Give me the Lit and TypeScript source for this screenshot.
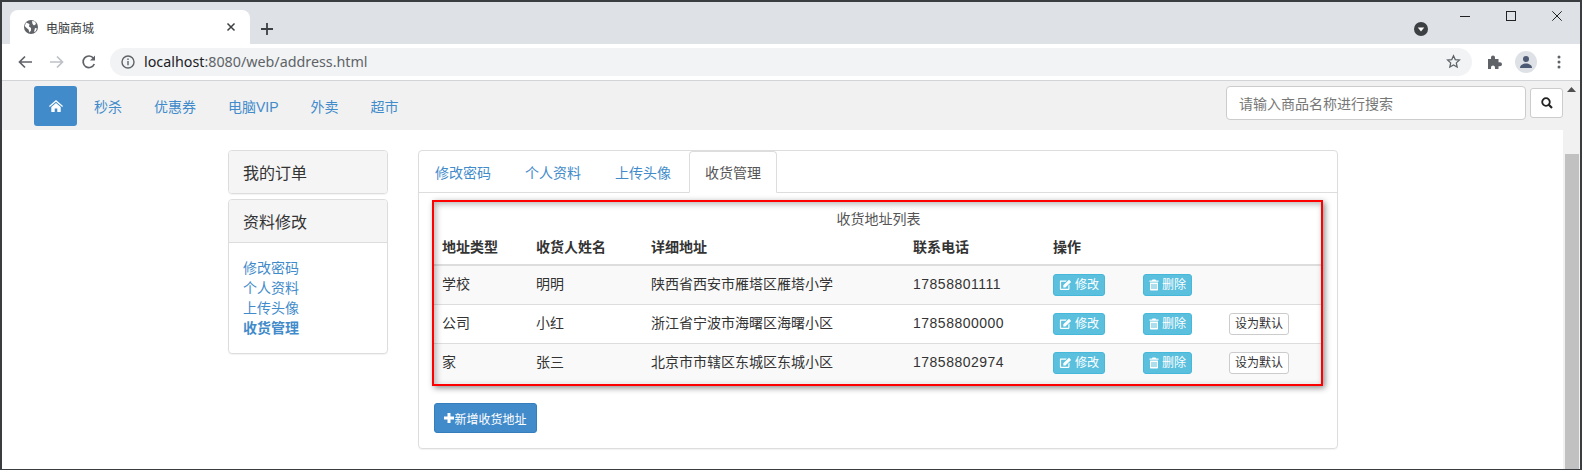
import { LitElement, html, css, svg } from "lit";
import { customElement } from "lit/decorators.js";

const rows = [
  { type: "学校", name: "明明", addr: "陕西省西安市雁塔区雁塔小学", tel: "17858801111", def: false },
  { type: "公司", name: "小红", addr: "浙江省宁波市海曙区海曙小区", tel: "17858800000", def: true },
  { type: "家", name: "张三", addr: "北京市市辖区东城区东城小区", tel: "17858802974", def: true },
];

const editIcon = svg`<svg class="gi" width="13" height="12" viewBox="0 0 13 12"><path d="M1.800 1.500h6L6.700 2.700H2.400c-.2 0-.3.100-.3.300v6.500c0 .2.100.3.300.3h6.600c.2 0 .3-.1.300-.3V6.700l1.200-1.200v4.200c0 .8-.6 1.400-1.400 1.400H2.300c-.8 0-1.400-.6-1.400-1.400V2.800c0-.8.200-1.300.9-1.300z" fill="currentColor"/><path d="M4.300 6.200 10 .8l2.100 2.100-5.700 5.500H4.300z" fill="currentColor"/></svg>`;
const trashIcon = svg`<svg class="gi" width="10" height="12" viewBox="0 0 10 12"><path d="M3.500 .4h3l.6 1h2.400v1.400H.5V1.400h2.400zM1 3.500h8v7c0 .7-.4 1.100-1 1.100H2c-.6 0-1-.4-1-1.100zM2.500 5v5h1V5zm2 0v5h1V5zm2 0v5h1V5z" fill="currentColor" fill-rule="evenodd"/></svg>`;

@customElement("app-root")
export class AppRoot extends LitElement {
  static styles = css`
    :host { display: block; width: 1582px; height: 470px; overflow: hidden; font-family: "Liberation Sans", "Noto Sans CJK SC", sans-serif; font-size: 14px; color: #333; }
    * { box-sizing: border-box; }
    .win { width: 1582px; height: 470px; border: solid #3a3d40; border-width: 2px 2px 1px 2px; display: flex; flex-direction: column; background: #fff; overflow: hidden; }
    .strip { height: 42px; background: #dee1e6; display: flex; align-items: flex-end; padding-left: 8px; flex: none; }
    .tab { width: 240px; height: 34px; background: #fff; border-radius: 8px 8px 0 0; display: flex; align-items: center; padding: 0 14px 0 13px; font-size: 12px; color: #3c4043; gap: 7px; font-family: "Noto Sans CJK SC", sans-serif; }
    .tab span { flex: 1; }
    .plus { margin: 0 0 9px 11px; display: flex; }
    .spacer { flex: 1; }
    .drop { margin: 0 14px 8px 0; display: flex; }
    .winbtns { align-self: flex-start; display: flex; margin-top: 6px; }
    .winbtn { width: 46px; height: 16px; display: flex; align-items: center; justify-content: center; }
    .toolbar { height: 37px; flex: none; background: #fff; border-bottom: 1px solid #d3d4d6; display: flex; align-items: center; padding: 0 0 1px 15px; }
    .navicon { display: flex; width: 16px; margin-right: 16px; }
    .navicon.last { margin-right: 13px; }
    .omni { flex: none; width: 1362px; height: 28px; background: #f1f3f4; border-radius: 14px; display: flex; align-items: center; padding: 0 11px 0 11px; font-family: "Noto Sans", sans-serif; font-size: 14.3px; color: #5f6368; gap: 9px; }
    .omni b { font-weight: normal; color: #202124; }
    .omni .u { flex: 1; }
    .exts { display: flex; align-items: center; margin-left: 15px; }
    .avatar { width: 22px; height: 22px; border-radius: 50%; background: #dee1e6; display: flex; align-items: center; justify-content: center; margin: 0 20px 0 12px; }
    .page { flex: 1; display: flex; min-height: 0; }
    .content { flex: 1; min-width: 0; }
    .scroll { width: 17px; flex: none; background: #f1f1f1; display: flex; flex-direction: column; align-items: center; padding-top: 6px; }
    .thumb { width: 14px; flex: 1; margin-top: 62px; background: #c1c1c1; }
    .nav { height: 49px; background: #f1f1f1; display: flex; align-items: flex-start; padding: 5px 0 0 32px; }
    .home { width: 43px; height: 40px; background: #428bca; border-radius: 3px; display: flex; align-items: center; justify-content: center; margin-right: 17px; }
    .navlinks { display: flex; gap: 32px; height: 40px; align-items: center; color: #428bca; font-size: 14px; }
    .search { margin-left: auto; display: flex; gap: 4px; align-items: flex-start; }
    .input { width: 300px; height: 34px; border: 1px solid #ccc; border-radius: 4px; background: #fff; padding: 0 12px; display: flex; align-items: center; color: #777; font-size: 14px; }
    .sbtn { width: 33px; height: 30px; margin-top: 2px; border: 1px solid #ccc; border-radius: 3px; background: #fff; display: flex; align-items: center; justify-content: center; }
    .main { display: flex; align-items: flex-start; padding: 20px 0 0 226px; gap: 30px; }
    .left { width: 160px; display: flex; flex-direction: column; gap: 5px; }
    .panel { border: 1px solid #ddd; border-radius: 4px; box-shadow: 0 1px 1px rgba(0,0,0,.05); overflow: hidden; }
    .ph { height: 42px; background: #f5f5f5; font-size: 16px; display: flex; align-items: center; padding-left: 14px; color: #333; }
    .panel .ph.b { height: 43px; border-bottom: 1px solid #ddd; }
    .pb { padding: 15px 14px 0; height: 110px; display: flex; flex-direction: column; color: #428bca; line-height: 20px; }
    .pb strong { font-weight: bold; }
    .right { width: 920px; height: 299px; border: 1px solid #ddd; border-radius: 4px; box-shadow: 0 1px 1px rgba(0,0,0,.05); display: flex; flex-direction: column; }
    .tabs { height: 42px; flex: none; border-bottom: 1px solid #ddd; display: flex; align-items: flex-end; color: #428bca; }
    .t { height: 41px; display: flex; align-items: center; padding-left: 16px; width: 90px; white-space: nowrap; }
    .t.active { width: 88px; height: 42px; margin-bottom: -1px; padding-left: 15px; background: #fff; border: 1px solid #ddd; border-bottom-color: #fff; border-radius: 4px 4px 0 0; color: #555; }
    .body { padding: 7px 15px 0 13px; }
    .box { position: relative; width: 891px; height: 186px; border: 2px solid #f00; box-shadow: 2px 2px 6px rgba(0,0,0,.45); background: #fff; }
    .box::after { content: ""; position: absolute; inset: 0; box-shadow: inset 2px 2px 6px rgba(0,0,0,.3); pointer-events: none; }
    table { border-collapse: collapse; width: 887px; table-layout: fixed; }
    .c1 { width: 94px; }
    .c2 { width: 115px; }
    .c3 { width: 262px; }
    .c4 { width: 140px; }
    .c5 { width: 90px; }
    .c6 { width: 86px; }
    caption { padding: 7px 0 0 2px; line-height: 20px; height: 27px; color: #555; text-align: center; }
    th { text-align: left; font-weight: bold; height: 36px; padding: 0 0 2px 8px; border-bottom: 2px solid #ddd; color: #333; vertical-align: middle; }
    td { padding: 0 0 2px 8px; height: 39px; border-top: 1px solid #ddd; vertical-align: middle; line-height: 20px; color: #333; }
    td.act { padding-bottom: 0; }
    tbody tr:nth-child(odd) td { background: #f9f9f9; }
    tbody tr:first-child td { border-top: 0; }
    tbody tr:last-child td { height: 40px; }
    .tel { letter-spacing: .5px; }
    .btn { display: inline-flex; align-items: center; justify-content: center; height: 22px; border-radius: 3px; font-size: 12px; gap: 3px; vertical-align: middle; }
    .info { background: #5bc0de; color: #fff; border: 1px solid #46b8da; }
    .w1 { width: 52px; }
    .w2 { width: 49px; }
    .def { width: 60px; background: #fff; border: 1px solid #ccc; color: #333; }
    .add { margin: 17px 0 0 2px; width: 103px; height: 30px; background: #428bca; border: 1px solid #357ebd; border-radius: 3px; color: #fff; display: flex; align-items: center; justify-content: center; font-size: 12px; gap: 0; white-space: nowrap; }
    .gi { flex: none; }
  `;

  render() {
    return html`
      <div class="win">
        <div class="strip">
          <div class="tab">
            <svg width="16" height="16" viewBox="0 0 16 16"><circle cx="8" cy="8" r="7" fill="#5f6368"/><path d="M3 3.500 6.500 5 6 7.500l2 1.500v2.500l-1.500 2-1-3L3 8.500 1.800 7zM9 2l3 .5L13 5l-2 1.500L9.500 5zM12 9l2 .5-1.500 3-1.500.5z" fill="#fff"/></svg>
            <span>电脑商城</span>
            <svg width="10" height="10" viewBox="0 0 10 10"><path d="M1.500 1.500l7 7M8.500 1.500l-7 7" stroke="#3c4043" stroke-width="1.500"/></svg>
          </div>
          <div class="plus"><svg width="12" height="12" viewBox="0 0 12 12"><path d="M6 0v12M0 6h12" stroke="#3c4043" stroke-width="1.800"/></svg></div>
          <div class="spacer"></div>
          <div class="drop"><svg width="14" height="14" viewBox="0 0 14 14"><circle cx="7" cy="7" r="7" fill="#3c4043"/><path d="M3.800 5.500h6.400L7 9.500z" fill="#fff"/></svg></div>
          <div class="winbtns">
            <div class="winbtn"><svg width="10" height="10" viewBox="0 0 10 10"><path d="M0 5.500h10" stroke="#222" stroke-width="1"/></svg></div>
            <div class="winbtn"><svg width="10" height="10" viewBox="0 0 10 10"><rect x=".5" y=".5" width="9" height="9" fill="none" stroke="#222"/></svg></div>
            <div class="winbtn"><svg width="10" height="10" viewBox="0 0 10 10"><path d="M.3.300l9.400 9.400M9.700.300.300 9.700" stroke="#222"/></svg></div>
          </div>
        </div>
        <div class="toolbar">
          <div class="navicon"><svg width="16" height="16" viewBox="0 0 16 16"><path d="M15 8H2.500M8 2.500 2.500 8 8 13.500" fill="none" stroke="#5f6368" stroke-width="1.700"/></svg></div>
          <div class="navicon"><svg width="16" height="16" viewBox="0 0 16 16"><path d="M1 8h12.500M8 2.500 13.500 8 8 13.500" fill="none" stroke="#bdc1c6" stroke-width="1.700"/></svg></div>
          <div class="navicon last"><svg width="16" height="16" viewBox="0 0 16 16"><path d="M13.300 10A5.800 5.800 0 1 1 12.500 4.200" fill="none" stroke="#5f6368" stroke-width="1.700"/><path d="M14 1.500V6.500H9z" fill="#5f6368"/></svg></div>
          <div class="omni">
            <svg width="14" height="14" viewBox="0 0 14 14"><circle cx="7" cy="7" r="6" fill="none" stroke="#5f6368" stroke-width="1.400"/><path d="M7 6v4.200M7 3.500v1.400" stroke="#5f6368" stroke-width="1.400"/></svg>
            <span class="u"><b>localhost</b>:8080/web/address.html</span>
            <svg width="15" height="15" viewBox="0 0 24 24"><path d="M12 2.800l2.800 6.200 6.700.7-5 4.500 1.400 6.700-5.900-3.400-5.900 3.400 1.400-6.700-5-4.500 6.700-.7z" fill="none" stroke="#5f6368" stroke-width="2"/></svg>
          </div>
          <div class="exts">
            <svg width="16" height="16" viewBox="0 0 16 16"><path d="M1 5h3V3.500a2 2 0 0 1 4 0V5h3.500v3.300H13a2 2 0 0 1 0 4h-1.500V15H8v-1.500a2 2 0 0 0-4 0V15H1z" fill="#5f6368"/></svg>
            <div class="avatar"><svg width="14" height="14" viewBox="0 0 14 14"><circle cx="7" cy="4" r="3" fill="#4d5a73"/><path d="M1 13c0-3 3-4.500 6-4.500s6 1.500 6 4.500z" fill="#4d5a73"/></svg></div>
            <svg width="4" height="14" viewBox="0 0 4 14"><circle cx="2" cy="2" r="1.500" fill="#5f6368"/><circle cx="2" cy="7" r="1.500" fill="#5f6368"/><circle cx="2" cy="12" r="1.500" fill="#5f6368"/></svg>
          </div>
        </div>
        <div class="page">
          <div class="content">
            <div class="nav">
              <div class="home"><svg width="14" height="12" viewBox="0 0 14 12"><path d="M7 0 14 6l-.8.900L7 1.700.8 6.900 0 6zM2.300 7 7 3l4.700 4v5H8.300V8.500H5.700V12H2.300z" fill="#fff"/></svg></div>
              <div class="navlinks"><span>秒杀</span><span>优惠券</span><span>电脑VIP</span><span>外卖</span><span>超市</span></div>
              <div class="search">
                <div class="input">请输入商品名称进行搜索</div>
                <div class="sbtn"><svg width="12" height="12" viewBox="0 0 12 12"><circle cx="5" cy="5" r="3.800" fill="none" stroke="#222" stroke-width="1.800"/><path d="M7.800 7.800 11 11" stroke="#222" stroke-width="2.200"/></svg></div>
              </div>
            </div>
            <div class="main">
              <div class="left">
                <div class="panel"><div class="ph">我的订单</div></div>
                <div class="panel">
                  <div class="ph b">资料修改</div>
                  <div class="pb"><span>修改密码</span><span>个人资料</span><span>上传头像</span><strong>收货管理</strong></div>
                </div>
              </div>
              <div class="right">
                <div class="tabs">
                  <div class="t">修改密码</div><div class="t">个人资料</div><div class="t">上传头像</div><div class="t active">收货管理</div>
                </div>
                <div class="body">
                  <div class="box">
                    <table>
                      <caption>收货地址列表</caption>
                      <colgroup><col class="c1"/><col class="c2"/><col class="c3"/><col class="c4"/><col class="c5"/><col class="c6"/><col/></colgroup>
                      <thead><tr><th>地址类型</th><th>收货人姓名</th><th>详细地址</th><th>联系电话</th><th>操作</th><th></th><th></th></tr></thead>
                      <tbody>
                        ${rows.map(r => html`<tr>
                          <td>${r.type}</td><td>${r.name}</td><td>${r.addr}</td><td class="tel">${r.tel}</td>
                          <td class="act"><span class="btn info w1">${editIcon}修改</span></td>
                          <td class="act"><span class="btn info w2">${trashIcon}删除</span></td>
                          <td class="act">${r.def ? html`<span class="btn def">设为默认</span>` : ""}</td>
                        </tr>`)}
                      </tbody>
                    </table>
                  </div>
                  <div class="add"><svg width="10" height="10" viewBox="0 0 10 10"><path d="M5 0v10M0 5h10" stroke="#fff" stroke-width="3"/></svg>新增收货地址</div>
                </div>
              </div>
            </div>
          </div>
          <div class="scroll">
            <svg width="9" height="5" viewBox="0 0 9 5"><path d="M0 5 4.500 0 9 5z" fill="#505050"/></svg>
            <div class="thumb"></div>
          </div>
        </div>
      </div>
    `;
  }
}
